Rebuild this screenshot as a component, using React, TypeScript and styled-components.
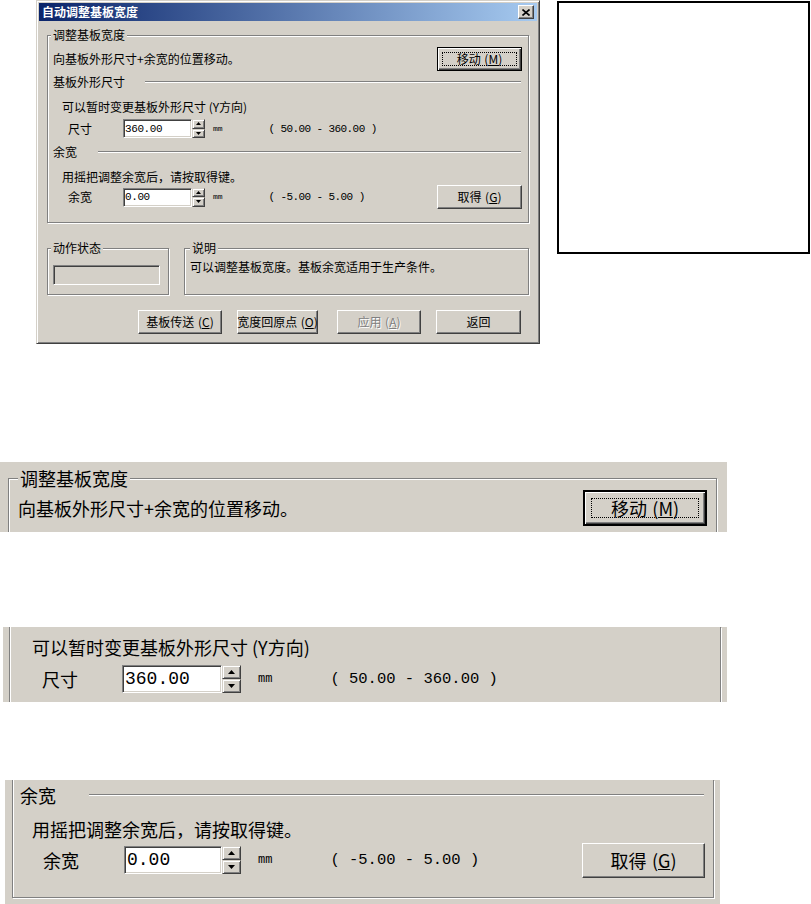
import React from "react";
import styled, { createGlobalStyle, css } from "styled-components";

const FACE = "#d4d0c8";
const SHADOW = "#808080";
const DARK = "#404040";
const CJK = `"Noto Sans CJK SC", "Noto Sans", sans-serif`;
const MONO = `"Liberation Mono", "DejaVu Sans Mono", monospace`;

type M = {
  fs: number;
  lh: number;
  mono: number;
  monoLs: number;
  inMono: number;
  inLs: number;
  inPad: number;
  mmFs: number;
  mmGap: number;
  rangeGap: number;
  labelPad: number;
  labelW: number;
  inputW: number;
  inputH: number;
  spinW: number;
  arrowW: number;
  arrowH: number;
  btnW: number;
  btnH: number;
  bw: number;
  focus: number;
};

const SM: M = {
  fs: 12, lh: 14, mono: 11, monoLs: -0.6, inMono: 11, inLs: -0.4, inPad: 1,
  mmFs: 8, mmGap: 8, rangeGap: 46, labelPad: 20, labelW: 55, inputW: 69, inputH: 19,
  spinW: 13, arrowW: 5, arrowH: 3, btnW: 85, btnH: 24, bw: 1, focus: 4,
};
const LG: M = {
  fs: 18, lh: 24, mono: 15.5, monoLs: 0, inMono: 18, inLs: 0, inPad: 2,
  mmFs: 12, mmGap: 17, rangeGap: 58, labelPad: 32, labelW: 80, inputW: 100, inputH: 28,
  spinW: 19, arrowW: 7, arrowH: 4, btnW: 124, btnH: 36, bw: 2, focus: 6,
};
const LG3: M = { ...LG, labelPad: 30, labelW: 81, inputW: 98, btnW: 123, btnH: 35 };

const Global = createGlobalStyle`
  html, body { margin: 0; padding: 0; background: #fff; }
  body { font-family: ${CJK}; color: #000; }
`;

const Page = styled.div`
  width: 811px;
  height: 904px;
  overflow: hidden;
  display: flex;
  flex-direction: column;
  align-items: flex-start;
`;

const TopRow = styled.div`
  display: flex;
  align-items: flex-start;
  height: 344px;
  flex: none;
`;

const Dialog = styled.section`
  margin-left: 36px;
  width: 504px;
  height: 344px;
  box-sizing: border-box;
  background: ${FACE};
  border: 1px solid;
  border-color: ${FACE} ${DARK} ${DARK} ${FACE};
  box-shadow: inset 1px 1px 0 #fff, inset -1px -1px 0 ${SHADOW};
  padding: 2px;
  display: flex;
  flex-direction: column;
`;

const TitleBar = styled.header`
  height: 18px;
  flex: none;
  display: flex;
  align-items: center;
  justify-content: space-between;
  background: linear-gradient(to right, #0a246a, #a6caf0);
  padding: 0 3px 0 3px;
`;

const TitleText = styled.span`
  color: #fff;
  font-weight: 700;
  font-size: 12px;
  line-height: 18px;
`;

const CloseBtn = styled.span`
  width: 16px;
  height: 14px;
  box-sizing: border-box;
  background: ${FACE};
  border: 1px solid;
  border-color: #fff ${DARK} ${DARK} #fff;
  box-shadow: inset -1px -1px 0 ${SHADOW};
  display: flex;
  align-items: center;
  justify-content: center;
`;

const Body = styled.div`
  flex: 1;
  display: flex;
  flex-direction: column;
  padding: 14px 8px 7px 8px;
`;

const Group = styled.div<{
  $pt?: number;
  $pr?: number;
  $pb?: number;
  $w?: number;
  $grow?: boolean;
  $noTop?: boolean;
}>`
  position: relative;
  box-sizing: border-box;
  display: flex;
  flex-direction: column;
  flex: none;
  border: 1px solid ${SHADOW};
  box-shadow: inset 1px 1px 0 #fff, 1px 1px 0 #fff;
  padding: ${(p) => `${p.$pt ?? 0}px ${p.$pr ?? 0}px ${p.$pb ?? 0}px 0`};
  ${(p) => p.$w != null && css`width: ${p.$w}px;`}
  ${(p) => p.$grow && css`flex: 1 1 0;`}
  ${(p) =>
    p.$noTop &&
    css`
      border-top: none;
      box-shadow: inset 1px 0 0 #fff, 1px 1px 0 #fff;
    `}
`;

const Legend = styled.span<{ $m: M; $left: number }>`
  position: absolute;
  left: ${(p) => p.$left}px;
  top: ${(p) => -(p.$m.lh / 2) - 1}px;
  padding: 0 2px;
  background: ${FACE};
  font-size: ${(p) => p.$m.fs}px;
  line-height: ${(p) => p.$m.lh}px;
  white-space: nowrap;
`;

const Line = styled.div<{ $m: M; $h?: number; $mt?: number; $pl?: number; $pr?: number }>`
  display: flex;
  align-items: center;
  flex: none;
  height: ${(p) => p.$h ?? p.$m.lh}px;
  margin-top: ${(p) => p.$mt ?? 0}px;
  padding-left: ${(p) => p.$pl ?? 0}px;
  padding-right: ${(p) => p.$pr ?? 0}px;
  font-size: ${(p) => p.$m.fs}px;
  line-height: ${(p) => p.$m.lh}px;
  white-space: nowrap;
`;

const SubHead = styled(Line)<{ $gap: number }>`
  gap: ${(p) => p.$gap}px;
`;

const Rule = styled.div`
  flex: 1;
  height: 0;
  border-top: 1px solid ${SHADOW};
  border-bottom: 1px solid #fff;
`;

const Spacer = styled.div`
  flex: 1;
`;

const Label = styled.span<{ $m: M }>`
  width: ${(p) => p.$m.labelW}px;
  flex: none;
`;

const TextBox = styled.input<{ $m: M }>`
  flex: none;
  box-sizing: border-box;
  width: ${(p) => p.$m.inputW}px;
  height: ${(p) => p.$m.inputH}px;
  margin: 0;
  padding: 0 0 0 ${(p) => p.$m.inPad}px;
  background: #fff;
  color: #000;
  border: 1px solid;
  border-color: ${SHADOW} #fff #fff ${SHADOW};
  box-shadow: inset 1px 1px 0 ${DARK}, inset -1px -1px 0 ${FACE};
  font-family: ${MONO};
  font-size: ${(p) => p.$m.inMono}px;
  letter-spacing: ${(p) => p.$m.inLs}px;
  outline: none;
`;

const Spinner = styled.div<{ $m: M }>`
  flex: none;
  display: flex;
  flex-direction: column;
  width: ${(p) => p.$m.spinW}px;
  height: ${(p) => p.$m.inputH}px;
`;

const SpinBtn = styled.span`
  flex: 1;
  box-sizing: border-box;
  background: ${FACE};
  border: 1px solid;
  border-color: ${FACE} ${DARK} ${DARK} ${FACE};
  box-shadow: inset 1px 1px 0 #fff, inset -1px -1px 0 ${SHADOW};
  display: flex;
  align-items: center;
  justify-content: center;
`;

const Unit = styled.span<{ $m: M }>`
  margin-left: ${(p) => p.$m.mmGap}px;
  font-family: ${MONO};
  font-size: ${(p) => p.$m.mmFs}px;
`;

const Range = styled.span<{ $m: M }>`
  margin-left: ${(p) => p.$m.rangeGap}px;
  font-family: ${MONO};
  font-size: ${(p) => p.$m.mono}px;
  letter-spacing: ${(p) => p.$m.monoLs}px;
  white-space: pre;
`;

const Btn = styled.button<{ $m: M; $w?: number; $mr?: number; $default?: boolean }>`
  position: relative;
  flex: none;
  box-sizing: border-box;
  width: ${(p) => p.$w ?? p.$m.btnW}px;
  height: ${(p) => p.$m.btnH}px;
  margin: 0 ${(p) => p.$mr ?? 0}px 0 0;
  padding: 0;
  background: ${FACE};
  color: #000;
  font-family: ${CJK};
  font-size: ${(p) => p.$m.fs}px;
  line-height: 1;
  border: 1px solid;
  border-color: #fff ${DARK} ${DARK} #fff;
  box-shadow: inset -1px -1px 0 ${SHADOW};
  display: flex;
  align-items: center;
  justify-content: center;
  white-space: nowrap;
  &:disabled {
    color: ${SHADOW};
    text-shadow: 1px 1px 0 #fff;
  }
  ${(p) =>
    p.$default &&
    css`
      border: ${p.$m.bw}px solid #000;
      box-shadow: inset 1px 1px 0 #fff, inset -1px -1px 0 ${DARK}, inset -2px -2px 0 ${SHADOW};
      &::after {
        content: "";
        position: absolute;
        inset: ${p.$m.focus}px;
        border: 1px dotted #000;
        pointer-events: none;
      }
    `}
`;

const Key = styled.span`
  margin-left: 0.3em;
`;

const GroupRow = styled.div`
  display: flex;
  flex: none;
  height: 47px;
  margin-top: 25px;
  gap: 15px;
`;

const StatusWell = styled.div`
  flex: none;
  margin-left: 5px;
  width: 107px;
  height: 20px;
  box-sizing: border-box;
  border: 1px solid;
  border-color: ${SHADOW} #fff #fff ${SHADOW};
  box-shadow: inset 1px 1px 0 ${DARK}, inset -1px -1px 0 ${FACE};
`;

const ButtonRow = styled.div`
  display: flex;
  flex: none;
  justify-content: flex-end;
  gap: 15px;
  margin-top: 15px;
  padding-right: 8px;
`;

const Frame = styled.div`
  flex: none;
  margin-left: 17px;
  margin-top: 1px;
  width: 253px;
  height: 253px;
  box-sizing: border-box;
  border: 2px solid #000;
  background: #fff;
`;

const Crop = styled.div<{
  $ml: number;
  $mt: number;
  $w: number;
  $h: number;
  $pt?: number;
  $pr?: number;
  $pb?: number;
  $pl?: number;
}>`
  flex: none;
  box-sizing: border-box;
  overflow: hidden;
  margin-left: ${(p) => p.$ml}px;
  margin-top: ${(p) => p.$mt}px;
  width: ${(p) => p.$w}px;
  height: ${(p) => p.$h}px;
  padding: ${(p) => `${p.$pt ?? 0}px ${p.$pr ?? 0}px ${p.$pb ?? 0}px ${p.$pl ?? 0}px`};
  background: ${FACE};
  display: flex;
  flex-direction: column;
`;

function Arrow({ m, up }: { m: M; up?: boolean }) {
  const w = m.arrowW;
  const h = m.arrowH;
  const pts = up ? `0,${h} ${w / 2},0 ${w},${h}` : `0,0 ${w / 2},${h} ${w},0`;
  return (
    <svg width={w} height={h} viewBox={`0 0 ${w} ${h}`}>
      <polygon points={pts} fill="#000" />
    </svg>
  );
}

function Caption({ text, k }: { text: string; k?: string }) {
  return (
    <>
      {text}
      {k && (
        <Key>
          (<u>{k}</u>)
        </Key>
      )}
    </>
  );
}

function Field({
  m,
  label,
  value,
  range,
  mt,
  h,
  children,
}: {
  m: M;
  label: string;
  value: string;
  range: string;
  mt: number;
  h: number;
  children?: React.ReactNode;
}) {
  return (
    <Line $m={m} $h={h} $mt={mt} $pl={m.labelPad}>
      <Label $m={m}>{label}</Label>
      <TextBox $m={m} readOnly value={value} />
      <Spinner $m={m}>
        <SpinBtn>
          <Arrow m={m} up />
        </SpinBtn>
        <SpinBtn>
          <Arrow m={m} />
        </SpinBtn>
      </Spinner>
      <Unit $m={m}>mm</Unit>
      <Range $m={m}>{range}</Range>
      {children && (
        <>
          <Spacer />
          {children}
        </>
      )}
    </Line>
  );
}

export default function App() {
  return (
    <>
      <Global />
      <Page>
        <TopRow>
          <Dialog>
            <TitleBar>
              <TitleText>自动调整基板宽度</TitleText>
              <CloseBtn>
                <svg width="8" height="7" viewBox="0 0 8 7">
                  <path d="M0.5 0.5 L7.5 6.5 M7.5 0.5 L0.5 6.5" stroke="#000" strokeWidth="1.6" />
                </svg>
              </CloseBtn>
            </TitleBar>
            <Body>
              <Group $pt={11} $pr={6} $pb={13}>
                <Legend $m={SM} $left={3}>调整基板宽度</Legend>
                <Line $m={SM} $h={24} $pl={5}>
                  向基板外形尺寸+余宽的位置移动。
                  <Spacer />
                  <Btn $m={SM} $default>
                    <Caption text="移动" k="M" />
                  </Btn>
                </Line>
                <SubHead $m={SM} $mt={4} $pl={5} $pr={1} $gap={20}>
                  基板外形尺寸
                  <Rule />
                </SubHead>
                <Line $m={SM} $mt={11} $pl={14}>
                  可以暂时变更基板外形尺寸 (Y方向)
                </Line>
                <Field m={SM} label="尺寸" value="360.00" range="( 50.00 - 360.00 )" mt={5} h={19} />
                <SubHead $m={SM} $mt={7} $pl={5} $pr={1} $gap={21}>
                  余宽
                  <Rule />
                </SubHead>
                <Line $m={SM} $mt={11} $pl={14}>
                  用摇把调整余宽后，请按取得键。
                </Line>
                <Field m={SM} label="余宽" value="0.00" range="( -5.00 - 5.00 )" mt={1} h={24}>
                  <Btn $m={SM}>
                    <Caption text="取得" k="G" />
                  </Btn>
                </Field>
              </Group>
              <GroupRow>
                <Group $w={122} $pt={16}>
                  <Legend $m={SM} $left={3}>动作状态</Legend>
                  <StatusWell />
                </Group>
                <Group $grow $pt={11}>
                  <Legend $m={SM} $left={5}>说明</Legend>
                  <Line $m={SM} $pl={5}>
                    可以调整基板宽度。基板余宽适用于生产条件。
                  </Line>
                </Group>
              </GroupRow>
              <ButtonRow>
                <Btn $m={SM} $w={84}>
                  <Caption text="基板传送" k="C" />
                </Btn>
                <Btn $m={SM} $w={81} $mr={4}>
                  <Caption text="宽度回原点" k="O" />
                </Btn>
                <Btn $m={SM} $w={84} disabled>
                  <Caption text="应用" k="A" />
                </Btn>
                <Btn $m={SM} $w={85}>
                  <Caption text="返回" />
                </Btn>
              </ButtonRow>
            </Body>
          </Dialog>
          <Frame />
        </TopRow>

        <Crop $ml={0} $mt={118} $w={727} $h={70} $pt={16} $pl={8} $pr={10}>
          <Group $pt={11} $pr={9} $pb={30}>
            <Legend $m={LG} $left={9}>调整基板宽度</Legend>
            <Line $m={LG} $h={36} $pl={9}>
              向基板外形尺寸+余宽的位置移动。
              <Spacer />
              <Btn $m={LG} $default>
                <Caption text="移动" k="M" />
              </Btn>
            </Line>
          </Group>
        </Crop>

        <Crop $ml={3} $mt={95} $w={724} $h={75} $pl={6} $pr={6}>
          <Group $noTop $pt={8} $pr={8} $pb={30}>
            <Line $m={LG} $pl={22}>
              可以暂时变更基板外形尺寸 (Y方向)
            </Line>
            <Field m={LG} label="尺寸" value="360.00" range="( 50.00 - 360.00 )" mt={6} h={28} />
          </Group>
        </Crop>

        <Crop $ml={5} $mt={78} $w={715} $h={124} $pl={7} $pr={6} $pb={6}>
          <Group $noTop $pt={3} $pr={8} $pb={19}>
            <SubHead $m={LG3} $pl={7} $pr={1} $gap={33}>
              余宽
              <Rule />
            </SubHead>
            <Line $m={LG3} $mt={10} $pl={19}>
              用摇把调整余宽后，请按取得键。
            </Line>
            <Field m={LG3} label="余宽" value="0.00" range="( -5.00 - 5.00 )" mt={1} h={36}>
              <Btn $m={LG3}>
                <Caption text="取得" k="G" />
              </Btn>
            </Field>
          </Group>
        </Crop>
      </Page>
    </>
  );
}
